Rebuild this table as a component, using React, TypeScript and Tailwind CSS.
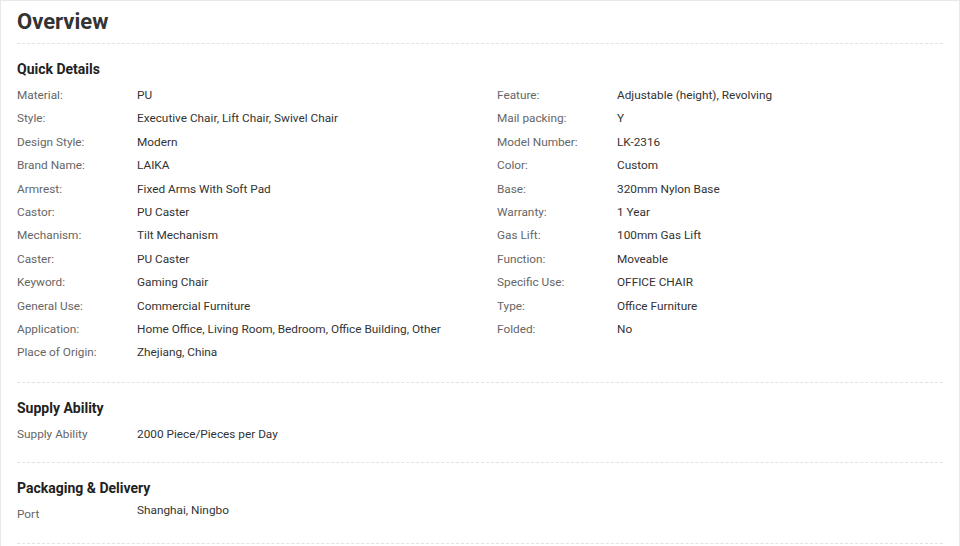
import React from "react";

interface spec {
  label: string;
  value: string;
}

const leftSpecs: spec[] = [
  { label: "Material:", value: "PU" },
  { label: "Style:", value: "Executive Chair, Lift Chair, Swivel Chair" },
  { label: "Design Style:", value: "Modern" },
  { label: "Brand Name:", value: "LAIKA" },
  { label: "Armrest:", value: "Fixed Arms With Soft Pad" },
  { label: "Castor:", value: "PU Caster" },
  { label: "Mechanism:", value: "Tilt Mechanism" },
  { label: "Caster:", value: "PU Caster" },
  { label: "Keyword:", value: "Gaming Chair" },
  { label: "General Use:", value: "Commercial Furniture" },
  { label: "Application:", value: "Home Office, Living Room, Bedroom, Office Building, Other" },
  { label: "Place of Origin:", value: "Zhejiang, China" },
];

const rightSpecs: spec[] = [
  { label: "Feature:", value: "Adjustable (height), Revolving" },
  { label: "Mail packing:", value: "Y" },
  { label: "Model Number:", value: "LK-2316" },
  { label: "Color:", value: "Custom" },
  { label: "Base:", value: "320mm Nylon Base" },
  { label: "Warranty:", value: "1 Year" },
  { label: "Gas Lift:", value: "100mm Gas Lift" },
  { label: "Function:", value: "Moveable" },
  { label: "Specific Use:", value: "OFFICE CHAIR" },
  { label: "Type:", value: "Office Furniture" },
  { label: "Folded:", value: "No" },
];

const Row = ({ label, value }: spec) => (
  <div className="flex text-[11.8px] leading-[23.4px]">
    <div className="w-[120px] shrink-0 text-[#666]">{label}</div>
    <div className="text-[#333]">{value}</div>
  </div>
);

const Heading = ({ children }: { children: React.ReactNode }) => (
  <h3 className="text-[14px] leading-[20px] font-bold text-[#222] mb-[5px]">{children}</h3>
);

const App = () => {
  return (
    <div
      className="w-[960px] min-h-[546px] bg-white border border-b-0 border-[#e8e8e8] px-4"
      style={{ fontFamily: "Roboto, 'Liberation Sans', sans-serif" }}
    >
      <div className="border-b border-dashed border-[#e2e2e2] pt-[6px] pb-[7px]">
        <h2 className="text-[22px] leading-[29px] font-bold text-[#333]">Overview</h2>
      </div>

      {/* quick details */}
      <div className="border-b border-dashed border-[#e2e2e2] pt-[15px] pb-[17px]">
        <Heading>Quick Details</Heading>
        <div className="grid grid-cols-[480px_1fr]">
          <div>
            {leftSpecs.map((s) => (
              <Row key={s.label} {...s} />
            ))}
          </div>
          <div>
            {rightSpecs.map((s) => (
              <Row key={s.label} {...s} />
            ))}
          </div>
        </div>
      </div>

      {/* supply */}
      <div className="border-b border-dashed border-[#e2e2e2] pt-[15px] pb-[16px]">
        <Heading>Supply Ability</Heading>
        <Row label="Supply Ability" value="2000 Piece/Pieces per Day" />
      </div>

      {/* packaging */}
      <div className="border-b border-dashed border-[#e2e2e2] pt-[15px] pb-[16px]">
        <Heading>Packaging &amp; Delivery</Heading>
        <div className="flex items-start text-[11.8px]">
          <div className="w-[120px] shrink-0 text-[#666] leading-[23.4px]">Port</div>
          <div className="text-[#333] leading-[15px]">Shanghai, Ningbo</div>
        </div>
      </div>
    </div>
  );
};

export default App;
